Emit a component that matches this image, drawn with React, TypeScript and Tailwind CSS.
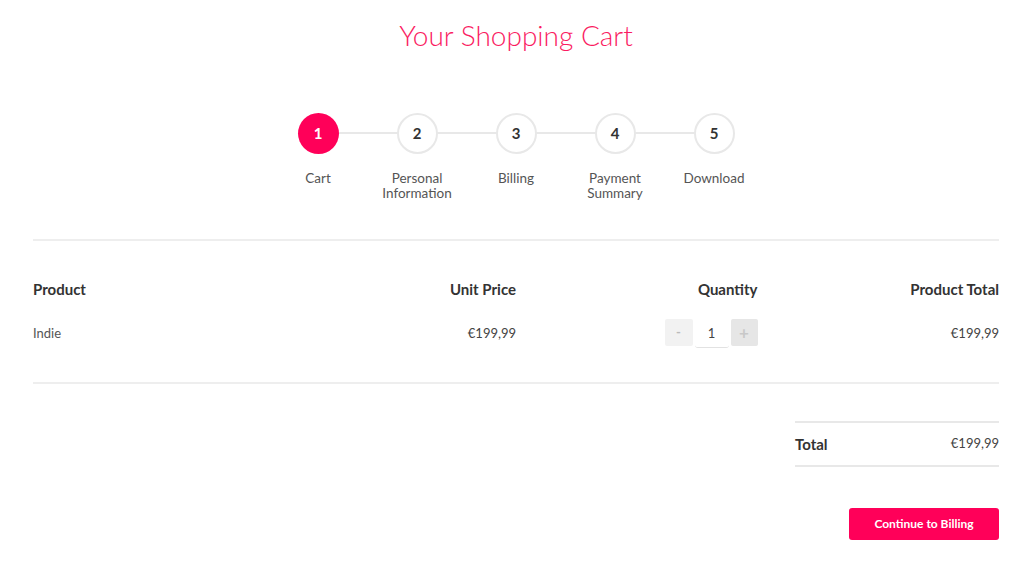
import React from "react";

const steps = [
  { n: "1", label: ["Cart"], active: true },
  { n: "2", label: ["Personal", "Information"] },
  { n: "3", label: ["Billing"] },
  { n: "4", label: ["Payment", "Summary"] },
  { n: "5", label: ["Download"] },
];

export default function App() {
  return (
    <div className="min-h-[568px] bg-white font-['Lato',_'Noto_Sans',_sans-serif]">
      <div className="ml-[33px] w-[966px]">
        <h1 className="pt-[17px] text-center text-[28px] font-light leading-[36px] text-[#fa1c62]">
          Your Shopping Cart
        </h1>

        <div className="mt-[60px] flex justify-center">
          <div className="relative flex">
            <div className="absolute left-[49.5px] right-[49.5px] top-[19px] h-[2px] bg-[#e8e8e8]" />
            {steps.map((s) => (
              <div key={s.n} className="relative flex w-[99px] flex-col items-center">
                <div
                  className={
                    s.active
                      ? "flex h-[41px] w-[41px] items-center justify-center rounded-full bg-[#ff0059] text-[15px] font-bold text-white"
                      : "flex h-[41px] w-[41px] items-center justify-center rounded-full border-2 border-[#e8e8e8] bg-white text-[15px] font-bold text-[#333]"
                  }
                >
                  {s.n}
                </div>
                <div className="mt-[17px] h-[30px] text-center text-[13.5px] leading-[15px] text-[#555]">
                  {s.label.map((l) => (
                    <div key={l}>{l}</div>
                  ))}
                </div>
              </div>
            ))}
          </div>
        </div>

        <div className="mt-[38px] h-[2px] bg-[#eeeeee]" />

        <div className="mt-[38px] grid h-[20px] grid-cols-4 items-center text-[15px] font-bold leading-[20px] text-[#333]">
          <div>Product</div>
          <div className="text-right">Unit Price</div>
          <div className="text-right">Quantity</div>
          <div className="text-right">Product Total</div>
        </div>

        <div className="mt-[20px] grid h-[27px] grid-cols-4 items-center text-[13px] text-[#444]">
          <div className="text-[#555]">Indie</div>
          <div className="text-right">€199,99</div>
          <div className="flex justify-end">
            <div className="flex items-start">
              <button className="flex h-[27px] w-[28px] items-center justify-center rounded-[2px] bg-[#f2f2f2] text-[13px] font-bold text-[#bbb]">
                -
              </button>
              <div className="ml-[2px] flex h-[29px] w-[34px] items-start justify-center rounded-b-[3px] border-b border-[#e2e2e2] pt-[5px] text-[13px] text-[#444]">
                1
              </div>
              <button className="ml-[2px] flex h-[27px] w-[27px] items-center justify-center rounded-[2px] bg-[#e6e6e6] text-[17px] font-bold text-[#c8c8c8]">
                +
              </button>
            </div>
          </div>
          <div className="text-right">€199,99</div>
        </div>

        <div className="mt-[36px] h-[2px] bg-[#eeeeee]" />

        <div className="ml-auto mt-[37px] w-[204px] border-y-2 border-[#e8e8e8]">
          <div className="flex h-[42px] items-center justify-between">
            <span className="text-[15px] font-bold text-[#333]">Total</span>
            <span className="text-[13px] text-[#444]">€199,99</span>
          </div>
        </div>

        <div className="mt-[41px] flex justify-end">
          <button className="h-[32px] w-[150px] rounded-[3px] bg-[#ff0059] text-[12px] font-bold text-white">
            Continue to Billing
          </button>
        </div>
      </div>
    </div>
  );
}
